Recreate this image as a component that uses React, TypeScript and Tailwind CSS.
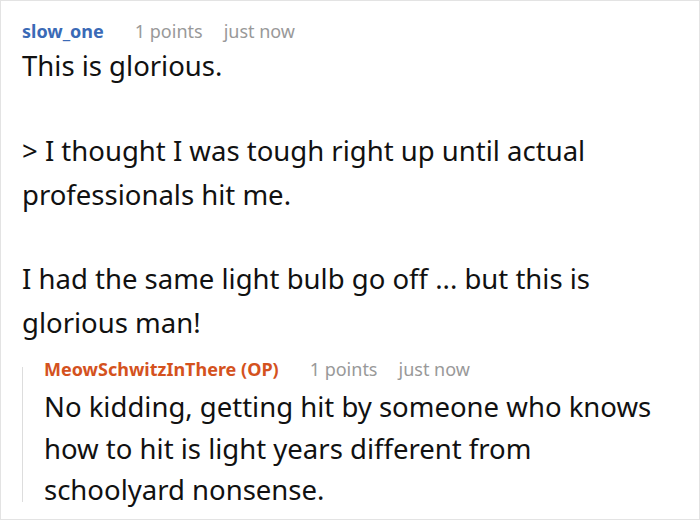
import React from "react";

export default function App() {
  const font = { fontFamily: '"Noto Sans", "Open Sans", sans-serif' };
  return (
    <div style={font} className="w-[700px] h-[520px] bg-white border border-[#e3e3e3] overflow-hidden">
      <div className="pl-[21px] pr-2 pt-[17px]">
        <div className="flex items-baseline text-[18px] leading-[26px]">
          <span className="font-bold text-[#3a6ab6]">slow_one</span>
          <span className="ml-[31px] text-[#999999]">1 points</span>
          <span className="ml-[21px] text-[#999999]">just now</span>
        </div>
        <div className="text-[27.5px] leading-[44px] text-[#111111]">
          <p>This is glorious.</p>
          <p className="mt-[41px]">&gt; I thought I was tough right up until actual professionals hit me.</p>
          <p className="mt-[40px]">I had the same light bulb go off ... but this is glorious man!</p>
        </div>
        <div className="flex mt-[11px]">
          <div className="w-px bg-[#dddddd] mt-[11px] h-[135px]" />
          <div className="pl-[21px]">
            <div className="flex items-baseline text-[18px] leading-[26px]">
              <span className="font-bold text-[#d4521e]">MeowSchwitzInThere (OP)</span>
              <span className="ml-[31px] text-[#999999]">1 points</span>
              <span className="ml-[21px] text-[#999999]">just now</span>
            </div>
            <div className="text-[27.5px] leading-[41.5px] text-[#111111] w-[625px] mt-[4px]">
              <p>No kidding, getting hit by someone who knows how to hit is light years different from schoolyard nonsense.</p>
            </div>
          </div>
        </div>
      </div>
    </div>
  );
}
